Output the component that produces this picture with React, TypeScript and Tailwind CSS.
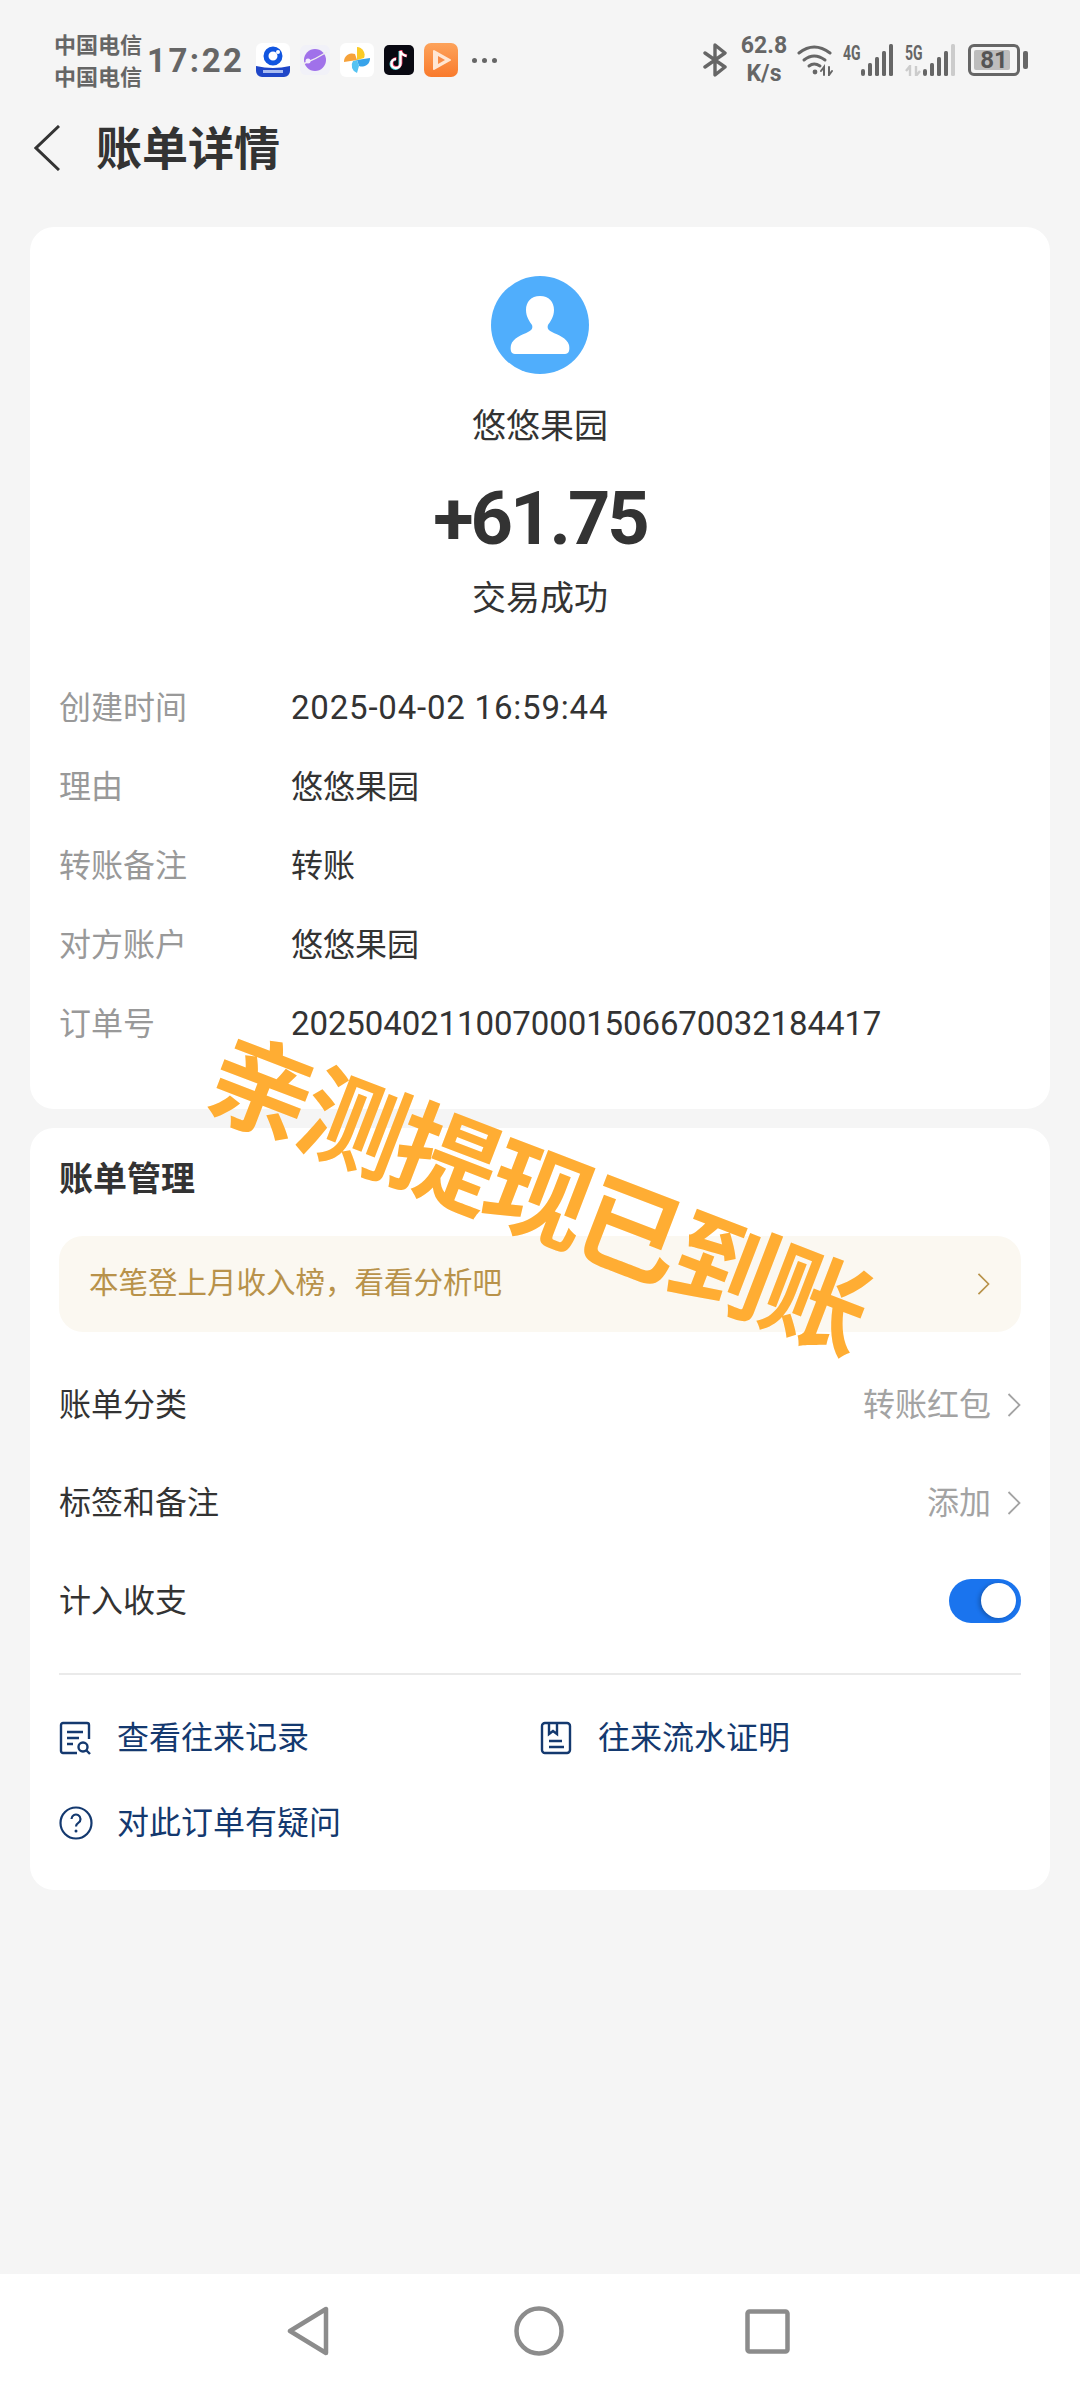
import React from "react";

const Chevron = ({ cls, color }: { cls: string; color: string }) => (
  <svg viewBox="0 0 14 24" className={cls} fill="none" stroke={color} strokeWidth="1.8">
    <path d="M1.5 1 L12.5 12 L1.5 23" />
  </svg>
);

const Bars = ({ lastLight }: { lastLight?: boolean }) => (
  <svg width="33" height="32" viewBox="0 0 33 32">
    <rect x="0" y="25" width="4" height="7" rx="2" fill="#666" />
    <rect x="7" y="19" width="4" height="13" rx="1.5" fill="#666" />
    <rect x="14" y="13" width="4" height="19" rx="1.5" fill="#666" />
    <rect x="21" y="7" width="4" height="25" rx="1.5" fill="#666" />
    <rect x="28" y="0" width="4" height="32" rx="1.5" fill={lastLight ? "#ccc" : "#666"} />
  </svg>
);

const AppIcons = () => (
  <div className="flex items-center ml-[11px] gap-[10px]">
    <svg width="34" height="34" viewBox="0 0 34 34">
      <rect width="34" height="34" rx="6" fill="#fff" />
      <circle cx="17" cy="13" r="7" fill="none" stroke="#1155e0" strokeWidth="5" />
      <circle cx="22" cy="9" r="2" fill="#fff" />
      <path d="M0 23 Q17 27 34 23 V28 a6 6 0 0 1-6 6 H6 a6 6 0 0 1-6-6Z" fill="#1f46c8" />
      <rect x="7" y="27" width="20" height="3" fill="#a9bcf2" />
    </svg>
    <svg width="30" height="34" viewBox="0 0 30 34">
      <rect y="2" width="30" height="30" rx="6" fill="#f1f1f8" />
      <circle cx="15" cy="17" r="11" fill="#a071ea" />
      <path d="M3 21 Q16 16 27 9" stroke="#eee" strokeWidth="1.4" fill="none" />
      <circle cx="8" cy="18" r="2.5" fill="#f3ecff" />
    </svg>
    <svg width="34" height="34" viewBox="0 0 34 34">
      <rect width="34" height="34" rx="6" fill="#fff" />
      <path d="M17 4 a8 8 0 0 1 7 11 l-7 2Z" fill="#fbcb26" />
      <path d="M30 15 a8 8 0 0 1-11 8 l-2-6Z" fill="#38a3ea" />
      <path d="M17 30 a8 8 0 0 1-4-12 l4-1 2 6Z" fill="#55c3f2" />
      <path d="M4 19 a8 8 0 0 1 11-8 l2 6Z" fill="#f6a23a" />
    </svg>
    <svg width="30" height="30" viewBox="0 0 30 30">
      <rect width="30" height="30" rx="5" fill="#090912" />
      <path d="M16 6 V19 a4.5 4.5 0 1 1-4.5-4.5" fill="none" stroke="#4de0e5" strokeWidth="3" />
      <path d="M17 5 V18 a4.5 4.5 0 1 1-4.5-4.5 M17 6 q1 4 6 5" fill="none" stroke="#f0305a" strokeWidth="3" />
      <path d="M16.5 6 V18.5 a4.5 4.5 0 1 1-4.5-4.5 M16.5 6 q1 4 6 5" fill="none" stroke="#fff" strokeWidth="2.4" />
    </svg>
    <svg width="34" height="34" viewBox="0 0 34 34">
      <defs>
        <linearGradient id="og" x1="0" y1="0" x2="0" y2="1">
          <stop offset="0" stopColor="#fda35b" />
          <stop offset="1" stopColor="#f97a2c" />
        </linearGradient>
      </defs>
      <rect width="34" height="34" rx="7" fill="url(#og)" />
      <path d="M10 8 L26 17 L10 26 Z" fill="#ffe6d2" stroke="#ffe6d2" strokeWidth="2" strokeLinejoin="round" />
      <path d="M14 13 L21 17 L14 21 Z" fill="#f98b45" />
    </svg>
    <div className="flex items-center gap-[5px] ml-[4px]">
      <span className="w-[5px] h-[5px] rounded-full bg-[#666]" />
      <span className="w-[5px] h-[5px] rounded-full bg-[#666]" />
      <span className="w-[5px] h-[5px] rounded-full bg-[#666]" />
    </div>
  </div>
);

const StatusBar = () => (
  <div className="h-[104px] pt-[16px] pl-[54px] pr-[52px] flex items-center justify-between text-[#666]">
    <div className="flex items-center">
      <div className="flex flex-col text-[22px] leading-[32px] font-bold w-[93px] -mt-[2px]">
        <span>中国电信</span>
        <span>中国电信</span>
      </div>
      <span className="text-[33px] font-bold tracking-[2.5px] leading-none font-['Roboto',sans-serif]">17:22</span>
      <AppIcons />
    </div>
    <div className="flex items-center">
      <svg width="24" height="34" viewBox="0 0 24 34" fill="none" stroke="#666" strokeWidth="3.4" strokeLinecap="round" strokeLinejoin="round">
        <path d="M2 10 L22 24 L12 32 V2 L22 10 L2 24" />
      </svg>
      <div className="flex flex-col items-center w-[52px] ml-[11px] font-bold text-[23px] leading-[28px] font-['Roboto',sans-serif]">
        <span>62.8</span>
        <span>K/s</span>
      </div>
      <svg className="ml-[7px]" width="37" height="32" viewBox="0 0 37 32" fill="none" stroke="#666" strokeWidth="3" strokeLinecap="round">
        <path d="M2 9 Q17 -3 33 9" />
        <path d="M7 16 Q17 8 28 16" />
        <path d="M12 22 Q17 18 23 22" />
        <circle cx="18" cy="28" r="2.4" fill="#666" stroke="none" />
        <path d="M27 31 V23 L24 27 M32 23 V31 L35 27" strokeWidth="2" />
      </svg>
      <div className="flex items-start ml-[9px]">
        <span className="w-[18px] text-[20px] font-bold leading-[18px] scale-x-[0.7] origin-left whitespace-nowrap font-['Roboto',sans-serif]">4G</span>
        <Bars />
      </div>
      <div className="relative flex items-start ml-[11px]">
        <span className="w-[18px] text-[20px] font-bold leading-[18px] scale-x-[0.7] origin-left whitespace-nowrap font-['Roboto',sans-serif]">5G</span>
        <svg className="absolute left-[0px] top-[21px]" width="16" height="11" viewBox="0 0 16 11" fill="none" stroke="#ccc" strokeWidth="2.4">
          <path d="M5 11 V1 L1 6 M11 1 V11 L15 6" />
        </svg>
        <Bars lastLight />
      </div>
      <div className="relative ml-[12px] w-[52px] h-[32px] border-[3px] border-[#666] rounded-[6px] flex items-center justify-center">
        <div className="absolute left-[3px] top-[3px] bottom-[3px] w-[36px] bg-[#bdbdbd] rounded-[2px]" />
        <span className="relative text-[24px] font-bold leading-none text-[#555] font-['Roboto',sans-serif]">81</span>
      </div>
      <div className="ml-[3px] w-[5px] h-[18px] rounded-[2px] bg-[#666]" />
    </div>
  </div>
);

const Header = () => (
  <div className="h-[88px] flex items-center pl-[34px]">
    <svg width="26" height="46" viewBox="0 0 26 46" fill="none" stroke="#333" strokeWidth="3">
      <path d="M25 1 L2 23 L25 45" />
    </svg>
    <h1 className="ml-[36px] -mt-[6px] text-[46px] font-bold text-[#333] leading-none">账单详情</h1>
  </div>
);

const rows = [
  ["理由", "悠悠果园"],
  ["转账备注", "转账"],
  ["对方账户", "悠悠果园"],
];

const InfoRow = ({ label, children }: { label: string; children: React.ReactNode }) => (
  <div className="h-[79px] flex items-center text-[32px] leading-none">
    <span className="w-[232px] -mt-[6px] text-[#999]">{label}</span>
    {children}
  </div>
);

const SummaryCard = () => (
  <section className="mx-[30px] mt-[35px] bg-white rounded-[24px] pt-[49px] pb-[46px] px-[29px]">
    <div className="flex flex-col items-center">
      <div className="w-[98px] h-[98px] rounded-full bg-[#50aefc] flex items-center justify-center">
        <svg width="60" height="60" viewBox="0 0 60 60" fill="#fff">
          <path d="M30 1 C21 1 16 7 16 15 C16 22 20 27 22 30 C23 33 22 35 18 37 C12 40 3 43 1 50 C0 55 1 59 5 59 H55 C59 59 60 55 59 50 C57 43 48 40 42 37 C38 35 37 33 38 30 C40 27 44 22 44 15 C44 7 39 1 30 1Z" />
        </svg>
      </div>
      <div className="mt-[25px] h-[50px] flex items-center text-[34px] leading-none text-[#333]">悠悠果园</div>
      <div className="mt-[25px] h-[90px] flex items-center text-[74px] font-bold tracking-[-3px] leading-none text-[#333] font-['Roboto',sans-serif]">+61.75</div>
      <div className="mt-[7px] mb-[3px] h-[50px] flex items-center text-[34px] leading-none text-[#333]">交易成功</div>
    </div>
    <div className="mt-[44px]">
      <InfoRow label="创建时间">
        <span className="text-[33px] tracking-[0.8px] text-[#333] font-['Roboto',sans-serif]">2025-04-02 16:59:44</span>
      </InfoRow>
      {rows.map(([k, v]) => (
        <InfoRow key={k} label={k}>
          <span className="-mt-[6px] text-[#333]">{v}</span>
        </InfoRow>
      ))}
      <InfoRow label="订单号">
        <span className="text-[33px] tracking-[-0.1px] text-[#333] font-['Roboto',sans-serif]">20250402110070001506670032184417</span>
      </InfoRow>
    </div>
  </section>
);

const Row = ({ label, value }: { label: string; value: string }) => (
  <div className="h-[98px] flex items-center justify-between text-[32px] leading-none">
    <span className="-mt-[6px] text-[#333]">{label}</span>
    <span className="flex items-center text-[#a3a3a3]">
      <span className="-mt-[6px]">{value}</span>
      <Chevron cls="w-[14px] h-[24px] ml-[16px]" color="#a3a3a3" />
    </span>
  </div>
);

const RecordIcon = () => (
  <svg width="34" height="34" viewBox="0 0 34 34" fill="none" stroke="#14396f" strokeWidth="2.4">
    <path d="M18 32 H4 a2 2 0 0 1-2-2 V4 a2 2 0 0 1 2-2 H28 a2 2 0 0 1 2 2 V18" />
    <path d="M8 11 H24 M8 17 H20 M8 23 H14" />
    <circle cx="24" cy="26" r="4.5" />
    <path d="M27 29 L31 33" />
  </svg>
);
const ProofIcon = () => (
  <svg width="32" height="34" viewBox="0 0 32 34" fill="none" stroke="#14396f" strokeWidth="2.4">
    <rect x="2" y="2" width="28" height="30" rx="3" />
    <path d="M9 2 V13 L13 10 L17 13 V2" />
    <path d="M9 20 H22 M9 26 H24" />
  </svg>
);
const HelpIcon = () => (
  <svg width="34" height="34" viewBox="0 0 34 34" fill="none" stroke="#14396f" strokeWidth="2.2">
    <circle cx="17" cy="17" r="15.5" />
    <path d="M12.5 13 a4.5 4.5 0 1 1 6.8 3.9 c-1.6 1-2.3 1.8-2.3 3.6" />
    <circle cx="17" cy="25" r="1.5" fill="#14396f" stroke="none" />
  </svg>
);

const Link = ({ icon, text }: { icon: React.ReactNode; text: string }) => (
  <div className="h-[85px] flex items-center text-[32px] leading-none text-[#14396f]">
    <span className="w-[58px] flex">{icon}</span>
    <span className="-mt-[6px]">{text}</span>
  </div>
);

const ManageCard = () => (
  <section className="mx-[30px] mt-[19px] bg-white rounded-[24px] pt-[27px] pb-[25px] px-[29px]">
    <h2 className="h-[50px] flex items-center text-[34px] leading-none font-bold text-[#333] pb-[6px]">账单管理</h2>
    <div className="mt-[31px] h-[96px] rounded-[24px] bg-[#fbf8f1] flex items-center justify-between pl-[30px] pr-[31px]">
      <span className="-mt-[6px] text-[29.5px] leading-none text-[#b8924a]">本笔登上月收入榜，看看分析吧</span>
      <Chevron cls="w-[13px] h-[22px]" color="#b8924a" />
    </div>
    <div className="mt-[24px]">
      <Row label="账单分类" value="转账红包" />
      <Row label="标签和备注" value="添加" />
      <div className="h-[97px] flex items-center justify-between text-[32px] leading-none text-[#333]">
        <span className="-mt-[6px]">计入收支</span>
        <div className="w-[72px] h-[44px] rounded-full bg-[#1a74ee] flex items-center justify-end pr-[5px]">
          <div className="w-[35px] h-[35px] rounded-full bg-white shadow-[-2px_1px_4px_rgba(0,0,0,0.25)]" />
        </div>
      </div>
    </div>
    <div className="mt-[24px] h-[2px] bg-[#eaeaea]" />
    <div className="mt-[20px] grid grid-cols-2">
      <Link icon={<RecordIcon />} text="查看往来记录" />
      <Link icon={<ProofIcon />} text="往来流水证明" />
      <Link icon={<HelpIcon />} text="对此订单有疑问" />
    </div>
  </section>
);

const NavBar = () => (
  <nav className="h-[114px] bg-white flex items-center justify-center pr-[4px]">
    <svg className="mr-[185px]" width="42" height="50" viewBox="0 0 42 50" fill="none" stroke="#8c8c8c" strokeWidth="4.5" strokeLinejoin="round">
      <path d="M39 3 V47 L3 25 Z" />
    </svg>
    <svg className="mr-[181px]" width="50" height="50" viewBox="0 0 50 50" fill="none" stroke="#8c8c8c" strokeWidth="4.5">
      <circle cx="25" cy="25" r="22.5" />
    </svg>
    <svg width="45" height="45" viewBox="0 0 45 45" fill="none" stroke="#8c8c8c" strokeWidth="4.5" strokeLinejoin="round">
      <rect x="2.5" y="2.5" width="40" height="40" rx="2" />
    </svg>
  </nav>
);

export default function App() {
  return (
    <div className="relative w-[1080px] h-[2388px] overflow-hidden bg-[#f5f5f5] flex flex-col font-['Noto_Sans_CJK_SC','Noto_Sans',sans-serif]">
      <main className="flex-1">
        <StatusBar />
        <Header />
        <SummaryCard />
        <ManageCard />
      </main>
      <NavBar />
      <div className="absolute left-[539px] top-[1188px] -translate-x-1/2 -translate-y-1/2 rotate-[21deg] whitespace-nowrap text-[104px] tracking-[-5px] leading-none font-bold text-[#ffad33]">
        亲测提现已到账
      </div>
    </div>
  );
}
